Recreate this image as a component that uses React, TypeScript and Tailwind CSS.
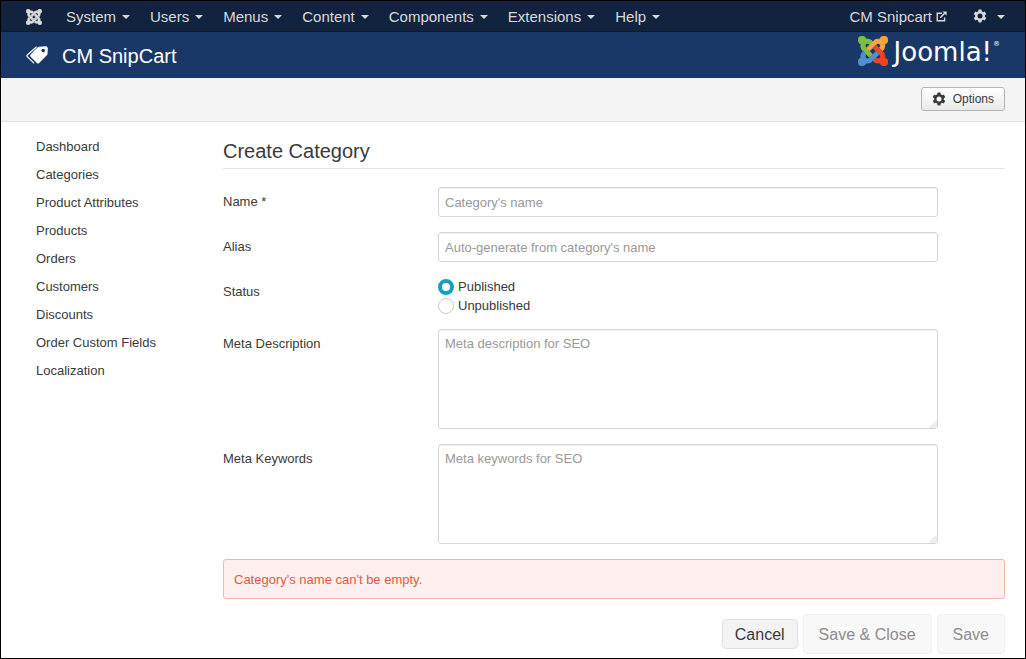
import { useState } from "react";

const caret = "mt-px inline-block h-0 w-0 border-x-4 border-t-4 border-x-transparent border-t-current";

const menus = ["System", "Users", "Menus", "Content", "Components", "Extensions", "Help"];

const links = [
  "Dashboard",
  "Categories",
  "Product Attributes",
  "Products",
  "Orders",
  "Customers",
  "Discounts",
  "Order Custom Fields",
  "Localization",
];

const field =
  "w-full rounded-[3px] border border-[#d6d6d6] bg-white px-[6px] text-[13px] leading-[18px] text-[#555] shadow-[inset_0_1px_1px_rgba(0,0,0,0.06)] outline-none placeholder:text-[#999]";

const area =
  "block h-[100px] py-[5px] [&::-webkit-resizer]:bg-[linear-gradient(135deg,transparent_70%,#eeeeee_70%)]";

const arms = [
  { d: "M.6 92.1C.6 58.8 27.4 32 60.4 32c30 0 54.5 21.9 59.2 50.2 32.6-7.6 67.1.6 96.5 30l-44.3 44.3c-20.5-20.5-42.6-16.3-55.4-3.5-14.3 14.3-14.3 37.9 0 52.2l99.5 99.5-44 44.3c-87.7-87.2-49.7-49.7-99.8-99.7-26.8-26.5-35-64.8-24.8-98.9C20.4 144.6.6 120.7.6 92.1z", color: "#7ac143" },
  { d: "M130.1 208.5l44.3 44.3c10-10 89.7-89.7 99.7-99.8 14.3-14.3 37.6-14.3 51.9 0 12.8 12.8 17 35-3.5 55.4l44 44.3c31.2-31.2 38.5-67.6 28.9-101.2 29.2-4.1 51.9-29.2 51.9-59.5 0-33.2-26.8-60.1-59.8-60.1-30.3 0-55.4 22.5-59.5 51.6-33.8-9.9-71.7-1.5-98.3 25.1-18.3 19.1-71.1 71.5-99.6 99.9z", color: "#f9a541" },
  { d: "M396.4 360.7c8.2-32.7-.9-68.5-26.3-93.9-11.8-12.2 5 4.7-99.5-99.7l-44.3 44.3 99.7 99.7c14.3 14.3 14.3 37.6 0 51.9-12.8 12.8-35 17-55.4-3.5l-44 44.3c27.6 30.2 68 38.8 102.7 28 5.5 27.4 29.7 48.1 58.9 48.1 33 0 59.8-26.8 59.8-60.1 0-30.2-22.5-55-51.6-59.1z", color: "#f44321" },
  { d: "M312.1 307.6l-44-44.3c-87 86.4-50.4 50.4-99.7 99.8-14.3 14.3-37.6 14.3-51.9 0-13.1-13.4-16.9-35.3 3.2-55.4l-44-44.3c-30.2 30.2-38 65.2-29.5 98.3-26.7 6-46.2 29.9-46.2 58.2C0 453.2 26.8 480 59.8 480c28.6 0 52.5-19.8 58.6-46.7 32.7 8.2 68.5-.6 94.2-26 32.1-32 12.2-12.4 99.5-99.7z", color: "#5091cd" },
];

function JoomlaMark({ className, mono }: { className: string; mono?: boolean }) {
  return (
    <svg viewBox="0 32 448 448" className={className} aria-hidden="true">
      {arms.map((arm) => (
        <path key={arm.color} d={arm.d} fill={mono ? "currentColor" : arm.color} stroke={mono ? "currentColor" : arm.color} strokeWidth="14" />
      ))}
    </svg>
  );
}

function Gear({ className }: { className: string }) {
  return (
    <svg viewBox="0 0 14 14" className={className} aria-hidden="true">
      <g fill="currentColor">
        <rect x="5.4" y="0.6" width="3.2" height="12.8" rx="0.6" />
        <rect x="5.4" y="0.6" width="3.2" height="12.8" rx="0.6" transform="rotate(60 7 7)" />
        <rect x="5.4" y="0.6" width="3.2" height="12.8" rx="0.6" transform="rotate(120 7 7)" />
      </g>
      <circle cx="7" cy="7" r="3.7" fill="none" stroke="currentColor" strokeWidth="2.4" />
      <circle cx="7" cy="7" r="2.5" className="fill-[var(--hole)]" />
    </svg>
  );
}

function Tags() {
  return (
    <svg viewBox="0 0 22 18" className="h-[18px] w-[22px]" aria-hidden="true">
      <path d="M13 0.8L19.6 0.2Q21.7 0.1 21.8 2.2L21.6 7.4Q21.5 8.4 20.8 9.2L13.2 17Q12 18 10.9 17L4.6 10.8Q3.6 9.7 4.6 8.6L11.4 1.6Q12.1 0.9 13 0.8Z" fill="#fff" />
      <circle cx="17.2" cy="4.6" r="1.8" fill="#1a3867" />
      <path d="M10.6 0.8L1.3 9Q0.4 9.8 1.3 10.7L8.2 17.4" fill="none" stroke="#fff" strokeWidth="1.2" />
    </svg>
  );
}

function ExternalLink() {
  return (
    <svg viewBox="0 0 11 11" className="h-[11px] w-[11px]" fill="none" stroke="currentColor" aria-hidden="true">
      <path d="M6 2.2H1.2V9.8H8.6V6.4" strokeWidth="1.4" />
      <path d="M4.2 6.8L9 2" strokeWidth="1.5" />
      <path d="M6.4 0.4H10.6V4.6Z" fill="currentColor" stroke="none" />
    </svg>
  );
}

export default function App() {
  const [status, setStatus] = useState("Published");
  return (
    <div className="min-h-screen border border-black bg-white font-['Liberation_Sans',Arial,sans-serif] text-[13px] leading-[18px] text-[#3a3a3a]">
      <nav className="flex h-[31px] items-center border-b border-[#0d1a2e] bg-[#12233f] pt-px pr-5 pl-[25px] text-[15px] text-[#d9d9d9]">
        <a href="#home" aria-label="Control panel" className="mr-6">
          <JoomlaMark mono className="h-4 w-4" />
        </a>
        <div className="flex gap-5">
          {menus.map((name) => (
            <button key={name} type="button" className="flex items-center gap-[6px]">
              {name}
              <span className={caret} />
            </button>
          ))}
        </div>
        <a href="#site" className="ml-auto flex items-center gap-1">
          CM Snipcart
          <ExternalLink />
        </a>
        <button type="button" aria-label="Settings" className="ml-[26px] flex items-center gap-[10px] [--hole:#12233f]">
          <Gear className="mb-[2px] h-[14px] w-[14px]" />
          <span className={caret} />
        </button>
      </nav>

      <header className="flex h-[46px] items-center bg-[#1a3867] pr-[25px] pl-[25px] text-white">
        <Tags />
        <h1 className="ml-[14px] pt-[2px] text-[20px] leading-[30px]">CM SnipCart</h1>
        <div className="mb-2 ml-auto flex items-center gap-[6px]">
          <JoomlaMark className="h-[30px] w-[30px]" />
          <span className="flex items-start pt-px font-['DejaVu_Sans',sans-serif] text-[26px] leading-[30px]">
            Joomla!<span className="pl-px text-[7px] leading-[14px]">®</span>
          </span>
        </div>
      </header>

      <div className="flex h-11 items-center justify-end border-b border-[#e3e3e3] bg-[#f4f4f4] pr-5 pb-[2px]">
        <button
          type="button"
          className="flex h-6 items-center gap-[7px] rounded-[3px] border border-[#b3b3b3] bg-linear-to-b from-white to-[#e9e9e9] px-[10px] text-[12px] [--hole:#f8f8f8]"
        >
          <Gear className="h-[14px] w-[14px]" />
          Options
        </button>
      </div>

      <div className="flex pr-5 pl-[35px]">
        <aside className="w-[187px] shrink-0 pt-4">
          <ul className="flex flex-col gap-[10px]">
            {links.map((name) => (
              <li key={name}>
                <a href="#list">{name}</a>
              </li>
            ))}
          </ul>
        </aside>

        <main className="min-w-0 flex-1 pt-[14px]">
          <h2 className="border-b border-[#e5e5e5] pb-[2px] text-[20px] leading-[30px]">Create Category</h2>
          <form className="mt-[18px]" onSubmit={(e) => e.preventDefault()}>
            <div className="grid grid-cols-[215px_minmax(0,500px)] gap-y-[15px]">
              <label htmlFor="name" className="pt-[6px]">Name *</label>
              <input id="name" type="text" placeholder="Category's name" className={`${field} h-[30px]`} />
              <label htmlFor="alias" className="pt-[6px]">Alias</label>
              <input id="alias" type="text" placeholder="Auto-generate from category's name" className={`${field} h-[30px]`} />
              <span id="status" className="pt-[6px]">Status</span>
              <div role="radiogroup" aria-labelledby="status" className="flex h-[37px] flex-col gap-px pt-px">
                {["Published", "Unpublished"].map((name) => (
                  <label key={name} className="flex shrink-0 items-center gap-1">
                    <input
                      type="radio"
                      name="status"
                      checked={status === name}
                      onChange={() => setStatus(name)}
                      className="h-4 w-4 appearance-none rounded-full border border-[#ccc] bg-white checked:border-4 checked:border-[#189fc0]"
                    />
                    {name}
                  </label>
                ))}
              </div>
              <label htmlFor="description" className="pt-[6px]">Meta Description</label>
              <textarea id="description" placeholder="Meta description for SEO" className={`${field} ${area}`} />
              <label htmlFor="keywords" className="pt-[6px]">Meta Keywords</label>
              <textarea id="keywords" placeholder="Meta keywords for SEO" className={`${field} ${area}`} />
            </div>
            <p role="alert" className="mt-[15px] rounded-[3px] border border-[#f5b5a8] bg-[#fff0ef] px-[10px] pt-[11px] pb-[9px] text-[#dd5a43]">
              Category's name can't be empty.
            </p>
            <div className="mt-[15px] flex items-center justify-end gap-[5px] pb-1 text-[16px] leading-5">
              <button type="button" className="rounded-[4px] border border-[#e2e2e2] bg-[#f3f3f3] px-3 pt-[5px] pb-[3px]">
                Cancel
              </button>
              <button type="submit" disabled className="rounded-[4px] border border-[#eee] bg-[#f8f8f8] px-[15px] pt-[10px] pb-2 text-[#8c8c8c]">
                Save &amp; Close
              </button>
              <button type="submit" disabled className="rounded-[4px] border border-[#eee] bg-[#f8f8f8] px-[15px] pt-[10px] pb-2 text-[#8c8c8c]">
                Save
              </button>
            </div>
          </form>
        </main>
      </div>
    </div>
  );
}
